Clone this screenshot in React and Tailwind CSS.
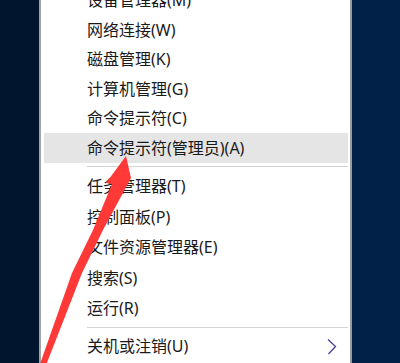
import React from "react";

const top = [
  "设备管理器(M)",
  "网络连接(W)",
  "磁盘管理(K)",
  "计算机管理(G)",
  "命令提示符(C)",
];
const mid = ["任务管理器(T)", "控制面板(P)", "文件资源管理器(E)", "搜索(S)", "运行(R)"];

function Row({ children, h, highlight }) {
  return (
    <div
      className={
        highlight
          ? "flex items-center bg-[#e5e5e5] ml-[3px] mr-[2px] pl-[43px]"
          : "flex items-center pl-[46px]"
      }
      style={{ height: h }}
    >
      <span>{children}</span>
    </div>
  );
}

function Sep() {
  return (
    <div className="flex h-[8px] items-center pl-[46px] pr-[2px]">
      <div className="h-px w-full bg-[#d4d4d4]" />
    </div>
  );
}

export default function App() {
  return (
    <div className="relative flex h-[363px] w-[400px] overflow-hidden">
      <div className="h-full w-[39px] bg-[#02152f]" />
      <div className="h-full w-[313px] overflow-hidden border-x-2 border-l-[#a4a4a4] border-r-[#9a9a9a] bg-white text-[16px] text-[#1a1a1a] [font-family:'Noto_Sans','Noto_Sans_CJK_SC',sans-serif]">
        <div className="mt-[-14.8px]">
          {top.map((t) => (
            <Row key={t} h="29.6px">
              {t}
            </Row>
          ))}
          <Row h="29.6px" highlight>
            命令提示符(管理员)(A)
          </Row>
          <Sep />
          {mid.map((t) => (
            <Row key={t} h="30.5px">
              {t}
            </Row>
          ))}
          <Sep />
          <div className="relative flex h-[30px] items-center pl-[46px]">
            <span>关机或注销(U)</span>
            <svg
              className="absolute left-[285px] top-[7px]"
              width="12"
              height="18"
              viewBox="0 0 12 18"
            >
              <polyline
                points="2,1.5 9.5,8.5 2.5,16"
                fill="none"
                stroke="#4e3f8e"
                strokeWidth="1.3"
              />
            </svg>
          </div>
        </div>
      </div>
      <div className="h-full flex-1 bg-[#022149]" />
      <svg
        className="pointer-events-none absolute left-0 top-0"
        width="400"
        height="363"
        viewBox="0 0 400 363"
      >
        <polygon
          points="126,156 131,178 103,230 82,273 46.5,364 40,364 72,273 93,230 112,184 106,183"
          fill="#ff3838"
        />
      </svg>
    </div>
  );
}
